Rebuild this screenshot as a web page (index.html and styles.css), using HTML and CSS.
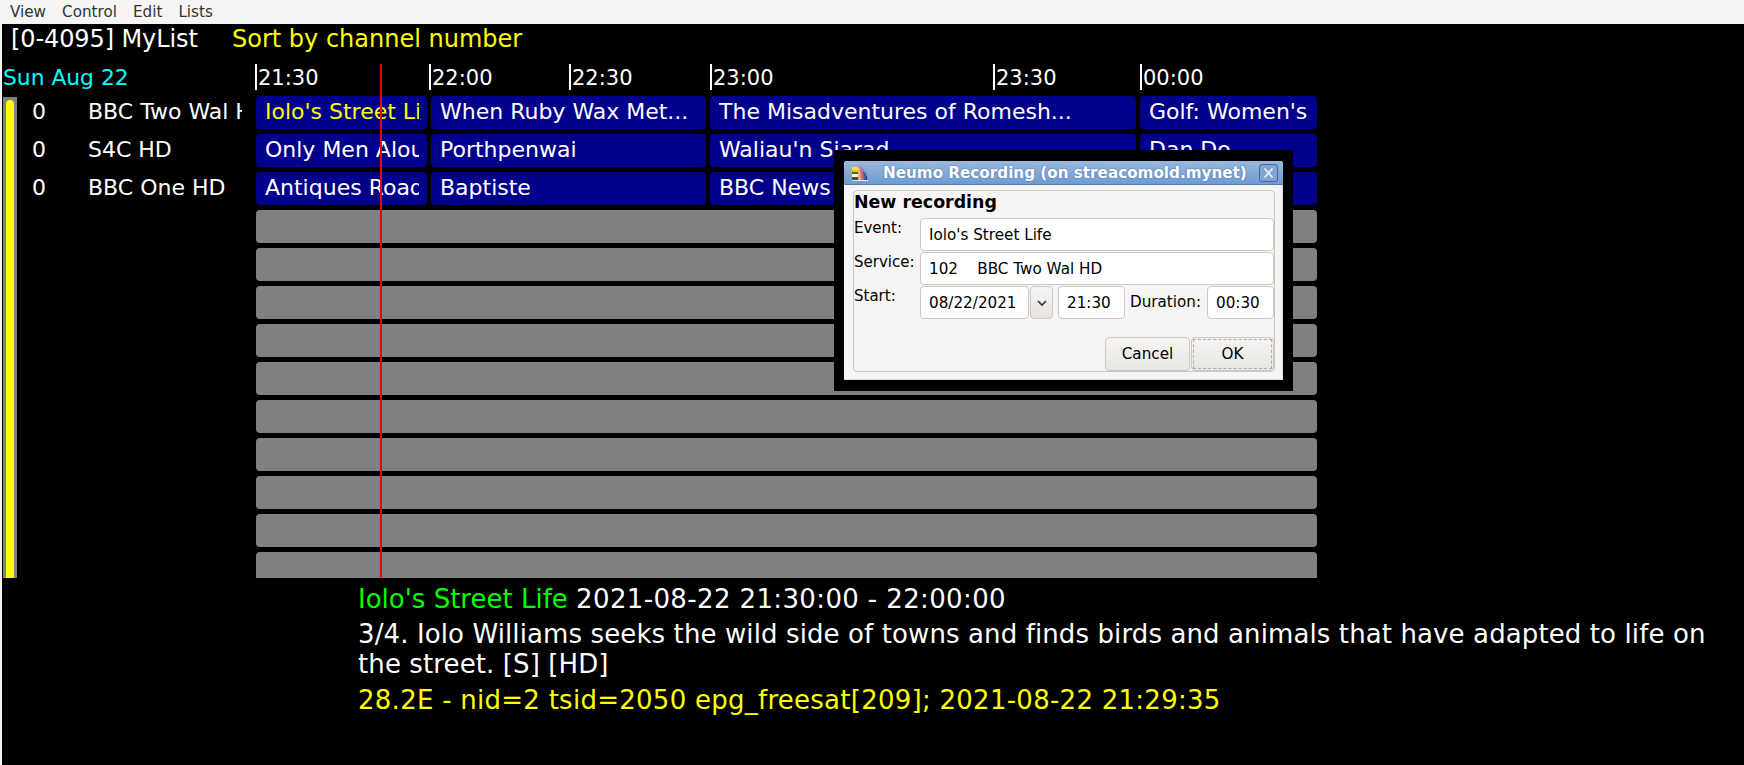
FILE: index.html
```html
<!DOCTYPE html>
<html>
<head>
  <title>Neumo</title>
  <link rel="stylesheet" href="styles.css">
</head>
<body>
  <div class="menubar">
    <span>View</span><span>Control</span><span>Edit</span><span>Lists</span>
  </div>

  <div class="screen">
    <div class="heading">
      <span class="list-name">[0-4095] MyList</span>
      <span class="sort-order">Sort by channel number</span>
    </div>

    <div class="ruler">
      <div class="day">Sun Aug 22</div>
      <div class="tick t30">21:30</div>
      <div class="tick t22">22:00</div>
      <div class="tick t22b">22:30</div>
      <div class="tick t23">23:00</div>
      <div class="tick t23b">23:30</div>
      <div class="tick">00:00</div>
    </div>

    <div class="guide">
      <div class="scrollbar"><div class="scrollbar-thumb"></div></div>
      <div class="channels">
        <div class="channel"><span class="chno">0</span><span class="chname">BBC Two Wal HD</span></div>
        <div class="channel"><span class="chno">0</span><span class="chname">S4C HD</span></div>
        <div class="channel"><span class="chno">0</span><span class="chname">BBC One HD</span></div>
      </div>
      <div class="grid">
        <div class="row">
          <div class="prog col1 current">Iolo's Street Life</div>
          <div class="prog col2">When Ruby Wax Met...</div>
          <div class="prog col3">The Misadventures of Romesh...</div>
          <div class="prog col4">Golf: Women's</div>
        </div>
        <div class="row">
          <div class="prog col1">Only Men Aloud</div>
          <div class="prog col2">Porthpenwai</div>
          <div class="prog col3">Waliau'n Siarad</div>
          <div class="prog col4">Dan Do</div>
        </div>
        <div class="row">
          <div class="prog col1">Antiques Road</div>
          <div class="prog col2">Baptiste</div>
          <div class="prog col3">BBC News</div>
          <div class="prog col4"></div>
        </div>
        <div class="row empty"></div>
        <div class="row empty"></div>
        <div class="row empty"></div>
        <div class="row empty"></div>
        <div class="row empty"></div>
        <div class="row empty"></div>
        <div class="row empty"></div>
        <div class="row empty"></div>
        <div class="row empty"></div>
        <div class="row empty"></div>
      </div>
    </div>

    <div class="details">
      <div class="line1"><span class="title">Iolo's Street Life</span> <span class="when">2021-08-22 21:30:00 - 22:00:00</span></div>
      <div class="story">3/4. Iolo Williams seeks the wild side of towns and finds birds and animals that have adapted to life on the street. [S] [HD]</div>
      <div class="source">28.2E - nid=2 tsid=2050 epg_freesat[209]; 2021-08-22 21:29:35</div>
    </div>

    <div class="now-line"></div>

    <div class="dialog-border">
      <div class="dialog">
        <div class="titlebar">
          <svg class="app-icon" width="16" height="16" viewBox="0 0 16 16">
            <rect x="0" y="14" width="16" height="2" fill="#dfe3ea"/>
            <path d="M6 2 L9 1 L15 9 L16 15 L6 15 Z" fill="#7d86b4"/>
            <path d="M6 3 L9 2 L10 15 L6 15 Z" fill="#e8b27a"/>
            <path d="M8 3 L11 5 L12 15 L9 15 Z" fill="#d8647e"/>
            <path d="M11 6 L14 9 L14 15 L12 15 Z" fill="#3f5aa8"/>
            <rect x="14" y="11" width="1" height="4" fill="#2f3a5c"/>
            <rect x="0" y="2" width="6" height="3" fill="#f7e22a"/>
            <rect x="0" y="5" width="6" height="2" fill="#e6b93a"/>
            <rect x="0" y="7" width="6" height="2" fill="#5a554a"/>
            <rect x="0" y="9" width="6" height="3" fill="#f6f3c4"/>
            <rect x="0" y="12" width="6" height="3" fill="#4c4a45"/>
          </svg>
          <span class="dialog-title">Neumo Recording (on streacomold.mynet)</span>
          <div class="close-btn">
            <svg width="13" height="12" viewBox="0 0 13 12"><path d="M2.5 1.5 L10.5 10.5 M10.5 1.5 L2.5 10.5" stroke="#e8eef7" stroke-width="1.8"/></svg>
          </div>
        </div>
        <div class="dialog-body">
          <div class="frame">
            <div class="frame-title">New recording</div>
            <div class="form-row">
              <label>Event:</label>
              <div class="field wide">Iolo's Street Life</div>
            </div>
            <div class="form-row">
              <label>Service:</label>
              <div class="field wide">102&nbsp;&nbsp;&nbsp; BBC Two Wal HD</div>
            </div>
            <div class="form-row">
              <label>Start:</label>
              <div class="field date">08/22/2021</div>
              <div class="drop">
                <svg width="12" height="8" viewBox="0 0 12 8"><path d="M2 2 L6 6 L10 2" fill="none" stroke="#2e3436" stroke-width="1.6"/></svg>
              </div>
              <div class="field time">21:30</div>
              <span class="dur-label">Duration:</span>
              <div class="field dur">00:30</div>
            </div>
            <div class="buttons">
              <button class="btn cancel">Cancel</button>
              <button class="btn ok"><span>OK</span></button>
            </div>
          </div>
        </div>
      </div>
    </div>
  </div>
</body>
</html>
```

FILE: styles.css
```css
html, body {
  margin: 0;
  padding: 0;
  height: 765px;
  overflow: hidden;
  background: #f6f5f4;
  font-family: "DejaVu Sans", sans-serif;
}

.menubar {
  height: 24px;
  display: flex;
  align-items: center;
  gap: 16px;
  padding-left: 10px;
  background: #f6f5f4;
  color: #2e3436;
  font-size: 15.2px;
  box-sizing: border-box;
}

.screen {
  position: relative;
  margin-left: 2px;
  height: 741px;
  background: #000;
  color: #fff;
  overflow: hidden;
}

.heading {
  height: 29px;
  padding-left: 9px;
  display: flex;
  align-items: center;
  font-size: 24px;
}
.list-name { width: 221px; letter-spacing: -0.1px; }
.sort-order { color: #ff0; }

.ruler {
  margin-top: 11px;
  height: 26px;
  display: flex;
  font-size: 21px;
  line-height: 28px;
}
.day { width: 253px; color: #0ff; padding-left: 1px; box-sizing: border-box; font-size: 21.8px; }
.tick { border-left: 2px solid #fff; padding-left: 1px; box-sizing: border-box; }
.t30 { width: 174px; }
.t22 { width: 140px; }
.t22b { width: 141px; }
.t23 { width: 283px; }
.t23b { width: 147px; }

.guide {
  margin-top: 6px;
  height: 482px;
  display: flex;
  overflow: hidden;
}

.scrollbar {
  margin: 1px 0 0 1px;
  width: 14px;
  padding: 0 3px;
  box-sizing: border-box;
  background: #808080;
}
.scrollbar-thumb {
  margin-top: 3px;
  height: 100%;
  background: #ff0;
  border-radius: 4px 4px 0 0;
}

.channels {
  width: 239px;
  font-size: 22px;
}
.channel {
  height: 38px;
  line-height: 31px;
  display: flex;
}
.chno { margin-left: 15px; width: 56px; }
.chname { width: 154px; overflow: hidden; white-space: nowrap; }

.grid {
  width: 1061px;
  display: flex;
  flex-direction: column;
  gap: 5px;
  flex: none;
}
.row {
  height: 33px;
  flex: none;
  display: flex;
  gap: 4px;
}
.row.empty {
  background: #808080;
  border-radius: 4px;
}
.prog {
  height: 33px;
  padding: 0 8px 0 9px;
  box-sizing: border-box;
  background: #00008b;
  border-radius: 4px;
  font-size: 22px;
  line-height: 31px;
  white-space: nowrap;
  overflow: clip;
  overflow-clip-margin: content-box;
}
.col1 { width: 171px; }
.col2 { width: 275px; }
.col3 { width: 426px; }
.col4 { width: 177px; }
.current { color: #ff0; }

.details {
  margin: 0 0 0 356px;
  padding-top: 3px;
  width: 1380px;
  font-size: 26px;
}
.line1 { line-height: 36px; margin-bottom: 2px; }
.title { color: #0f0; }
.when { letter-spacing: 0.37px; }
.story { line-height: 30px; letter-spacing: 0.11px; }
.source { color: #ff0; line-height: 36px; margin-top: 3px; letter-spacing: 0.26px; }

.now-line {
  position: absolute;
  left: 378px;
  top: 40px;
  width: 2px;
  height: 514px;
  background: #e00;
}

.dialog-border {
  position: absolute;
  left: 832px;
  top: 126px;
  padding: 11px 10px;
  background: #000;
}
.dialog {
  width: 439px;
  height: 219px;
  background: #f6f5f4;
  color: #000;
  display: flex;
  flex-direction: column;
  font-size: 15.2px;
  box-shadow: inset -1px -1px #dcdad7;
  border-radius: 3px 3px 0 0;
}
.titlebar {
  height: 24px;
  flex: none;
  display: flex;
  align-items: center;
  padding: 0 5px 0 8px;
  box-sizing: border-box;
  background: linear-gradient(#9ab8dd, #6f9bd0);
  border-bottom: 1px solid #4f7cb5;
  border-radius: 3px 3px 0 0;
}
.app-icon { flex: none; }
.dialog-title {
  flex: 1;
  color: #fff;
  font-weight: bold;
  font-size: 15.2px;
  white-space: nowrap;
  text-shadow: 0 0 2px #3f6ba5;
  margin-left: 15px;
}
.close-btn {
  width: 19px;
  height: 18px;
  box-sizing: border-box;
  border: 1px solid #41689c;
  border-radius: 3px;
  background: #82a5d2;
  display: flex;
  align-items: center;
  justify-content: center;
}

.dialog-body { padding: 5px 9px 8px 9px; flex: 1; display: flex; }
.frame {
  flex: 1;
  border: 1px solid #cdc7c2;
  border-radius: 4px;
  display: flex;
  flex-direction: column;
}
.frame-title {
  font-weight: bold;
  font-size: 17.4px;
  height: 27px;
  line-height: 22px;
}
.form-row {
  display: flex;
  height: 33px;
  margin-bottom: 1px;
  align-items: flex-start;
}
.form-row label { width: 66px; flex: none; line-height: 20px; font-size: 15px; }
.field {
  height: 33px;
  box-sizing: border-box;
  background: #fff;
  border: 1px solid #cdc7c2;
  border-radius: 4px;
  padding-left: 8px;
  line-height: 33px;
  white-space: pre;
}
.wide { width: 354px; }
.date { width: 109px; }
.drop {
  width: 23px;
  height: 33px;
  margin: 0 5px 0 1px;
  box-sizing: border-box;
  border: 1px solid #cdc7c2;
  border-radius: 4px;
  background: linear-gradient(#f6f5f4, #e6e3e0);
  display: flex;
  align-items: center;
  justify-content: center;
}
.time { width: 67px; }
.dur-label { width: 82px; line-height: 33px; padding-left: 5px; box-sizing: border-box; }
.dur { width: 67px; }

.buttons {
  margin-top: auto;
  display: flex;
  justify-content: flex-end;
  gap: 1px;
}
.btn {
  height: 34px;
  font: inherit;
  color: #000;
  border: 1px solid #cdc7c2;
  border-radius: 4px;
  background: linear-gradient(#f6f5f4, #e9e7e4);
  padding: 0;
}
.cancel { width: 85px; }
.ok { width: 83px; padding: 1px; }
.ok span {
  display: block;
  height: 100%;
  line-height: 28px;
  border: 1px dashed #aaa;
  box-sizing: border-box;
}
```
